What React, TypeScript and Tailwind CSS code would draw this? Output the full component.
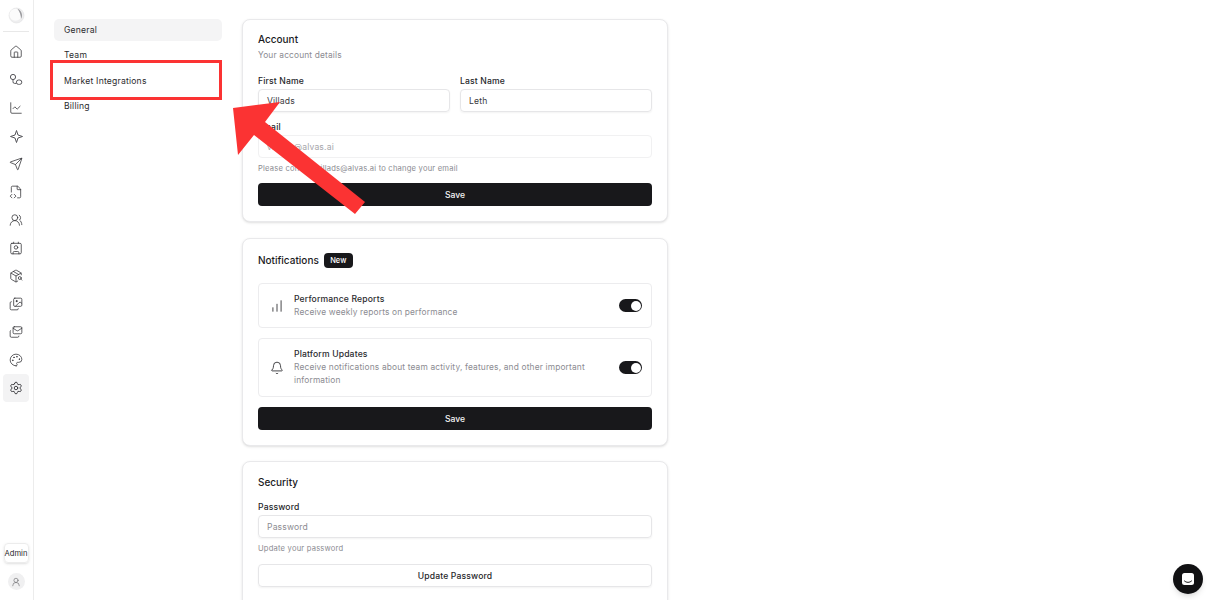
import React from 'react';
import {
  Home,
  ChartLine,
  Send,
  FileCode2,
  UsersRound,
  Contact,
  PackageSearch,
  Images,
  Mails,
  Palette,
  Settings,
  UserRound,
  ChartNoAxesColumnIncreasing,
  Bell,
} from 'lucide-react';

const font = { fontFamily: 'Inter, "Liberation Sans", sans-serif' };

const Logo = () => (
  <svg width="17" height="17" viewBox="0 0 17 17" fill="none">
    <circle cx="8.500" cy="8.500" r="7.500" fill="#eeeeef" stroke="#e0e0e2" strokeWidth="0.6" />
    <circle cx="7.500" cy="7.800" r="6" fill="#fbfbfb" />
    <path d="M9.500 1.800c2.600 1 4.300 3.300 4.500 6.200.1 1.400-.2 2.700-.9 3.800-.3-3.900-1.500-7.200-3.600-10Z" fill="#9a9a9e" />
  </svg>
);

const RouteIcon = () => (
  <svg width="14" height="14" viewBox="0 0 14 14" fill="none" stroke="#55555a" strokeWidth="1">
    <circle cx="4" cy="4" r="2.6" />
    <rect x="7.4" y="7" width="5.4" height="4.4" rx="2.2" />
    <path d="M4 6.600v2.200a1.600 1.600 0 0 0 1.600 1.600h1.800" />
  </svg>
);

const SparkIcon = () => (
  <svg width="15" height="15" viewBox="0 0 15 15" fill="none" stroke="#55555a" strokeWidth="1" strokeLinejoin="round">
    <path d="M7.500 1.500 9 6 13.500 7.500 9 9 7.500 13.500 6 9 1.500 7.500 6 6Z" />
  </svg>
);

const railIcons = [
  <Home size={14} strokeWidth={1.3} />,
  <RouteIcon />,
  <ChartLine size={14} strokeWidth={1.3} />,
  <SparkIcon />,
  <Send size={14} strokeWidth={1.3} />,
  <FileCode2 size={14} strokeWidth={1.3} />,
  <UsersRound size={14} strokeWidth={1.3} />,
  <Contact size={14} strokeWidth={1.3} />,
  <PackageSearch size={14} strokeWidth={1.3} />,
  <Images size={14} strokeWidth={1.3} />,
  <Mails size={14} strokeWidth={1.3} />,
  <Palette size={14} strokeWidth={1.3} />,
  <Settings size={14} strokeWidth={1.5} />,
];

const navItems = ['General', 'Team', 'Market Integrations', 'Billing'];

const Rail = () => (
  <aside className="w-[34px] shrink-0 h-full border-r border-[#ececec] pr-[1px] flex flex-col items-center">
    <div className="w-[26px] h-[32px] border-b border-[#e8e8e8] flex items-center justify-center">
      <Logo />
    </div>
    <div className="flex flex-col mt-[6px]">
      {railIcons.map((icon, i) => (
        <div
          key={i}
          className={`w-[26px] h-[28px] flex items-center justify-center rounded-[4px] text-[#2f2f33] ${
            i === 12 ? 'bg-[#f3f3f4]' : ''
          }`}
        >
          {icon}
        </div>
      ))}
    </div>
    <div className="mt-auto mb-[10px] flex flex-col items-center">
      <div className="w-[25px] h-[20px] pt-[1px] border border-[#ececec] rounded-[4px] flex items-center justify-center text-[7.6px] text-[#27272a] shadow-sm">
        Admin
      </div>
      <div className="w-[17px] h-[17px] rounded-full bg-[#f0f0f1] flex items-center justify-center mt-[10px] text-[#55555a]">
        <UserRound size={10} strokeWidth={1.3} />
      </div>
    </div>
  </aside>
);

const SubNav = () => (
  <nav className="w-[168px] shrink-0 ml-[20px] pt-[19px] flex flex-col">
    {navItems.map((item, i) => (
      <div
        key={item}
        className={`h-[22px] mb-[3.3px] px-[10px] pt-[1px] flex items-center text-[8.6px] tracking-[0.2px] text-[#2b2b2e] rounded-[5px] ${
          i === 0 ? 'bg-[#f4f4f5]' : ''
        }`}
      >
        {item}
      </div>
    ))}
  </nav>
);

const Card = ({ children, className = '' }: { children: React.ReactNode; className?: string }) => (
  <section className={`w-[426px] border border-[#e9e9eb] rounded-[8px] bg-white px-[15px] shadow-sm ${className}`}>
    {children}
  </section>
);

const Field = ({
  label,
  value,
  tone = 'text-[#3a3a3e]',
  box = 'border-[#e6e6e8] shadow-xs',
  className = '',
}: {
  label: string;
  value: string;
  tone?: string;
  box?: string;
  className?: string;
}) => (
  <div className={className}>
    <div className="text-[8.6px] leading-[12px] font-medium tracking-[0.15px] text-[#26262a] mb-[2px]">{label}</div>
    <div className={`h-[23px] border rounded-[4px] px-[8px] pt-[1px] flex items-center text-[8.6px] tracking-[0.15px] ${box} ${tone}`}>
      {value}
    </div>
  </div>
);

const SaveButton = ({ className = '' }: { className?: string }) => (
  <div className={`h-[23px] pt-[2px] bg-[#18181b] rounded-[4px] flex items-center justify-center text-[8.6px] font-medium text-[#f4f4f5] ${className}`}>
    Save
  </div>
);

const Toggle = () => (
  <div className="w-[23px] h-[13px] rounded-full bg-[#18181b] flex items-center justify-end pr-[1.5px] shrink-0">
    <div className="w-[10px] h-[10px] rounded-full bg-white" />
  </div>
);

const NotifyRow = ({
  icon,
  title,
  text,
  className = '',
}: {
  icon: React.ReactNode;
  title: string;
  text: string;
  className?: string;
}) => (
  <div className={`border border-[#ececee] rounded-[4px] pl-[11px] pr-[9px] flex items-center ${className}`}>
    <div className="w-[14px] shrink-0 flex justify-center text-[#1f1f22]">{icon}</div>
    <div className="ml-[10px] w-[300px]">
      <div className="text-[8.6px] leading-[13px] font-medium tracking-[0.15px] text-[#2b2b2e]">{title}</div>
      <div className="text-[8.4px] leading-[13px] tracking-[0.15px] text-[#8c8c92]">{text}</div>
    </div>
    <div className="ml-auto">
      <Toggle />
    </div>
  </div>
);

const Account = () => (
  <Card className="h-[203px] pt-[12px]">
    <h2 className="text-[10px] leading-[14px] font-medium text-[#1a1a1d]">Account</h2>
    <p className="text-[8.4px] leading-[13px] mt-[3px] tracking-[0.15px] text-[#8c8c92]">Your account details</p>
    <div className="grid grid-cols-2 gap-[10px] mt-[13px]">
      <Field label="First Name" value="Villads" />
      <Field label="Last Name" value="Leth" />
    </div>
    <Field label="Email" value="villads@alvas.ai" tone="text-[#a5a5aa]" box="border-[#f1f1f2]" className="mt-[9px]" />
    <p className="text-[7.6px] leading-[12px] mt-[5px] tracking-[0.2px] text-[#8c8c92]">
      Please contact villads@alvas.ai to change your email
    </p>
    <SaveButton className="mt-[8px]" />
  </Card>
);

const Notifications = () => (
  <Card className="h-[208px] mt-[16px] pt-[14px]">
    <div className="flex items-center h-[15px]">
      <h2 className="text-[10px] font-medium text-[#1a1a1d]">Notifications</h2>
      <span className="ml-[5px] w-[29px] h-[15px] rounded-[4px] bg-[#18181b] text-white text-[7.5px] font-medium flex items-center justify-center">
        New
      </span>
    </div>
    <NotifyRow
      icon={<ChartNoAxesColumnIncreasing size={16} strokeWidth={1.4} />}
      title="Performance Reports"
      text="Receive weekly reports on performance"
      className="h-[45px] mt-[15px]"
    />
    <NotifyRow
      icon={<Bell size={16} strokeWidth={1.4} />}
      title="Platform Updates"
      text="Receive notifications about team activity, features, and other important information"
      className="h-[59px] mt-[10px]"
    />
    <SaveButton className="mt-[10px]" />
  </Card>
);

const Security = () => (
  <Card className="h-[180px] mt-[15px] pt-[13px]">
    <h2 className="text-[10px] leading-[14px] font-medium text-[#1a1a1d]">Security</h2>
    <Field label="Password" value="Password" tone="text-[#8c8c92]" className="mt-[12px]" />
    <p className="text-[7.6px] leading-[12px] mt-[5px] tracking-[0.2px] text-[#8c8c92]">Update your password</p>
    <div className="h-[23px] mt-[9px] pt-[1px] border border-[#e6e6e8] rounded-[4px] flex items-center justify-center text-[8.6px] font-medium tracking-[0.15px] text-[#26262a] shadow-xs">
      Update Password
    </div>
  </Card>
);

export default function App() {
  return (
    <div className="relative w-[1209px] h-[600px] overflow-hidden bg-white flex" style={font}>
      <Rail />
      <SubNav />
      <main className="ml-[20px] pt-[19px]">
        <Account />
        <Notifications />
        <Security />
      </main>

      {/* annotation drawn on top of the screenshot */}
      <div className="absolute left-[50px] top-[60px] w-[172px] h-[40px] border-[3px] border-[#fb3333]" />
      <svg className="absolute left-0 top-0 pointer-events-none" width="1209" height="600">
        <polygon points="233,108 280,102 265,122 365,202 355,214 254,135 238,155" fill="#fb3333" />
      </svg>

      <div className="absolute left-[1173px] top-[564px] w-[30px] h-[30px] rounded-full bg-[#111113] flex items-center justify-center shadow-md">
        <svg width="14" height="14" viewBox="0 0 14 14" fill="none">
          <rect x="1" y="1" width="12" height="12" rx="2.5" fill="white" />
          <path d="M3.500 9c1 .9 2.200 1.300 3.500 1.300S9.500 9.900 10.500 9" stroke="#111113" strokeWidth="1" strokeLinecap="round" />
        </svg>
      </div>
    </div>
  );
}
